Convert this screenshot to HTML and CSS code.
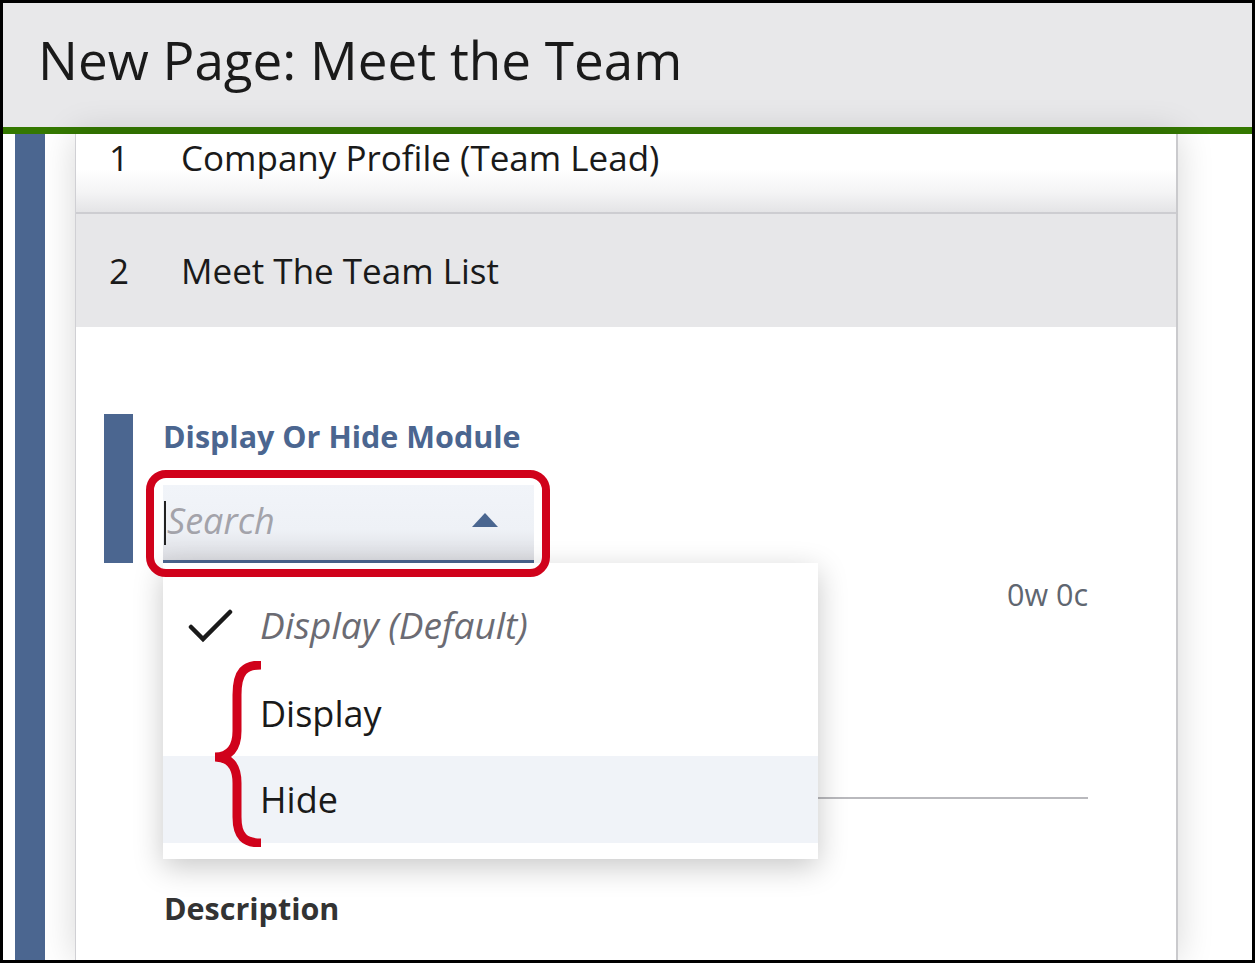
FILE: index.html
```html
<!DOCTYPE html>
<html>
<head>
<meta charset="utf-8">
<link rel="stylesheet" href="styles.css">
</head>
<body>
<div class="frame">
  <header class="topbar">
    <h1 class="title">New Page: Meet the Team</h1>
  </header>
  <div class="main">
    <div class="strip"></div>
    <div class="card">
      <div class="row row-one">
        <span class="num">1</span><span class="row-title">Company Profile (Team Lead)</span>
      </div>
      <div class="row row-two">
        <span class="num">2</span><span class="row-title">Meet The Team List</span>
      </div>
      <div class="content">
        <div class="field">
          <div class="marker"></div>
          <div class="field-body">
            <div class="label">Display Or Hide Module</div>
            <div class="input">
              <span class="caret"></span>
              <span class="placeholder">Search</span>
              <svg class="arrow" width="26" height="14" viewBox="0 0 26 14"><polygon points="13,0 26,14 0,14" fill="#4a6690"/></svg>
            </div>
          </div>
        </div>
        <div class="count-row"><span class="count">0w 0c</span></div>
        <div class="rule"></div>
        <div class="desc">Description</div>

        <div class="annot-box"></div>
        <div class="dropdown">
          <div class="opt opt-default">
            <svg class="check" width="46" height="36" viewBox="0 0 46 36"><polyline points="3,19 15,31 42,4" fill="none" stroke="#1a1a1a" stroke-width="4.5" stroke-linecap="round" stroke-linejoin="miter"/></svg>
            <span>Display (Default)</span>
          </div>
          <div class="opt">Display</div>
          <div class="opt opt-hover">Hide</div>
          <svg class="brace" width="56" height="186" viewBox="0 0 56 186"><path d="M50,4 C34,4 26,10 26,34 L26,70 C26,88 18,96 4,96 C18,96 26,104 26,122 L26,156 C26,176 34,182 50,182" fill="none" stroke="#d0021b" stroke-width="9"/></svg>
        </div>
      </div>
    </div>
    <div class="aside"></div>
  </div>
</div>
</body>
</html>
```

FILE: styles.css
```css
* { box-sizing: border-box; }
html, body { margin: 0; padding: 0; background: #fff; }
body { font-family: "Open Sans", "Noto Sans", sans-serif; color: #1a1a1a; }

.frame {
  width: 1255px;
  height: 963px;
  border: 3px solid #000;
  overflow: hidden;
  display: flex;
  flex-direction: column;
}

.topbar {
  height: 131px;
  flex: none;
  background: #e8e8ea;
  border-bottom: 7px solid #347800;
  display: flex;
  align-items: center;
  padding-left: 35px;
  padding-bottom: 12px;
}
.title {
  margin: 0;
  font-weight: 400;
  font-size: 53px;
  color: #1a1a1a;
  letter-spacing: 0;
}

.main {
  flex: 1;
  display: flex;
  padding-left: 12px;
  min-height: 0;
}
.strip {
  width: 30px;
  flex: none;
  background: #4b6690;
  margin-right: 30px;
}
.card {
  width: 1103px;
  flex: none;
  border-left: 1px solid #d0d0d4;
  border-right: 2px solid #cacacd;
  background: #fff;
  box-shadow: 0 0 34px rgba(0,0,0,0.16);
  position: relative;
  z-index: 1;
  display: flex;
  flex-direction: column;
}
.aside { flex: 1; background: #fff; }

.row {
  display: flex;
  align-items: center;
  font-size: 35px;
  padding-left: 33px;
}
.num { width: 72px; }
.row-one {
  height: 80px;
  align-items: flex-start;
  line-height: 48px;
  border-bottom: 2px solid #cdcdd1;
  background: linear-gradient(to bottom, #fff 0%, #fff 45%, #f4f4f5 75%, #e4e4e6 100%);
}
.row-two {
  height: 113px;
  background: #e7e7e9;
}

.content {
  position: relative;
  flex: 1;
  padding: 87px 88px 0 28px;
}
.field { display: flex; height: 149px; }
.marker { width: 29px; background: #4b6690; flex: none; }
.field-body { margin-left: 30px; display: flex; flex-direction: column; }
.label {
  font-weight: 700;
  font-size: 30.5px;
  color: #4b6690;
  line-height: 44px;
  margin-left: 0;
  height: 71px;
}
.input {
  width: 371px;
  height: 78px;
  background: linear-gradient(to bottom, #f1f4f9 0%, #eef1f6 60%, #dcdde2 100%);
  border-bottom: 3px solid #4b6690;
  display: flex;
  align-items: center;
  padding-left: 1px;
  padding-right: 36px;
}
.caret { width: 2px; height: 44px; background: #222; margin-right: 1px; }
.placeholder {
  font-style: italic;
  font-size: 36px;
  color: #a3a3aa;
  flex: 1;
  margin-top: -4px;
}
.arrow { margin-top: -6px; }

.count-row {
  display: flex;
  justify-content: flex-end;
  margin-top: 6px;
  height: 50px;
}
.count { font-size: 30.5px; color: #5f6670; line-height: 50px; }
.rule {
  margin-top: 178px;
  margin-left: 59px;
  height: 2px;
  background: #b9b9bd;
}
.desc {
  margin-top: 88px;
  margin-left: 60px;
  font-weight: 700;
  font-size: 30.5px;
  color: #333;
  line-height: 42px;
}

.annot-box {
  position: absolute;
  left: 70px;
  top: 143px;
  width: 404px;
  height: 107px;
  border: 8px solid #d0021b;
  border-radius: 20px;
  z-index: 3;
}
.dropdown {
  position: absolute;
  left: 87px;
  top: 236px;
  width: 655px;
  padding: 20px 0 16px;
  background: #fff;
  box-shadow: 0 8px 28px rgba(0,0,0,0.22);
  z-index: 2;
}
.opt {
  height: 86px;
  display: flex;
  align-items: center;
  padding-left: 97px;
  font-size: 36px;
  color: #1a1a1a;
  position: relative;
}
.opt-default { font-style: italic; color: #6b6b73; height: 87px; font-size: 37px; }
.opt-default span { margin-top: -4px; }
.check { position: absolute; left: 25px; top: 25px; }
.opt-hover { background: #f0f3f8; height: 87px; }
.brace { position: absolute; top: 98px; z-index: 4; left: 48px; }
```
